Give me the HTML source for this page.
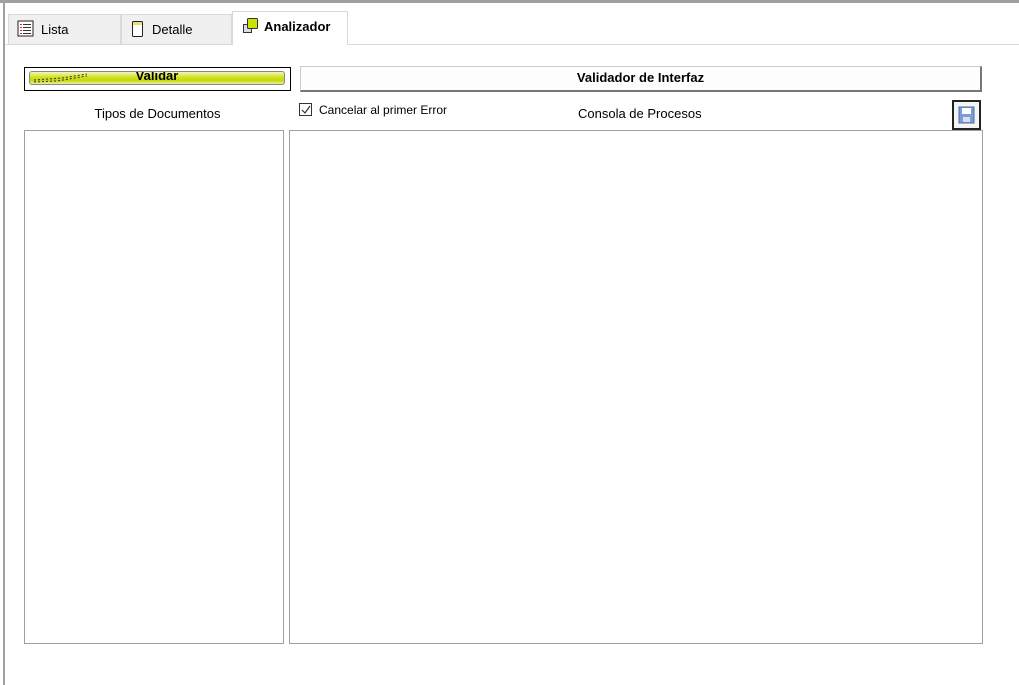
<!DOCTYPE html><html><head><style>
body{margin:0;width:1019px;height:685px;background:#fff;position:relative;overflow:hidden;font-family:"Liberation Sans",sans-serif;font-size:12px;color:#000}
.a{position:absolute}
.tab{position:absolute;top:14px;height:30px;background:#f0f0f0;border:1px solid #d9d9d9;border-bottom:none;box-sizing:border-box;line-height:30px;font-size:13px}
</style></head><body>
<div class="a" style="left:0;top:0;width:1019px;height:3px;background:#a0a0a0"></div>
<div class="a" style="left:3px;top:0;width:2px;height:685px;background:#a0a0a0"></div>
<div class="a" style="left:5px;top:3px;width:1014px;height:41px;background:#fff"></div>
<div class="tab" style="left:8px;width:113px;padding-left:32px">Lista</div>
<svg class="a" style="left:17px;top:20px" width="18" height="18"><rect x="1" y="1" width="15" height="15" fill="#fff" stroke="#222"/><g stroke="#333"><line x1="6" y1="4.5" x2="14" y2="4.5"/><line x1="6" y1="7.5" x2="14" y2="7.5"/><line x1="6" y1="10.5" x2="14" y2="10.5"/><line x1="6" y1="13.5" x2="14" y2="13.5"/></g><g stroke="#d22"><line x1="3" y1="4.5" x2="5" y2="4.5"/><line x1="3" y1="7.5" x2="5" y2="7.5"/><line x1="3" y1="10.5" x2="5" y2="10.5"/><line x1="3" y1="13.5" x2="5" y2="13.5"/></g></svg>
<div class="tab" style="left:121px;width:111px;padding-left:30px">Detalle</div>
<svg class="a" style="left:131px;top:20px" width="14" height="18"><rect x="1.5" y="1.5" width="10" height="15" rx="1" fill="#fff" stroke="#222"/><rect x="2" y="2" width="9" height="3" fill="#e8e070"/></svg>
<div class="tab" style="left:232px;top:11px;height:34px;width:116px;background:#fff;padding-left:31px;font-weight:bold;line-height:30px">Analizador</div>
<svg class="a" style="left:242px;top:17px" width="20" height="20"><rect x="1.5" y="7.5" width="8" height="8" fill="#ddd" stroke="#333"/><rect x="5.5" y="1.5" width="10" height="10" rx="1" fill="#c8e400" stroke="#333"/></svg>
<div class="a" style="left:5px;top:44px;width:227px;height:1px;background:#d9d9d9"></div>
<div class="a" style="left:348px;top:44px;width:671px;height:1px;background:#d9d9d9"></div>

<div class="a" style="left:24px;top:67px;width:267px;height:24px;border:1px solid #000;box-sizing:border-box;background:#fff"></div>
<div class="a" style="left:29px;top:71px;width:256px;height:14px;border:1px solid #888;border-radius:3px;background:linear-gradient(#f4f4c0,#cfe21c 45%,#c6d80a 70%,#eef0a0);box-sizing:border-box;text-align:center;font-weight:bold;font-size:13px;line-height:8px;overflow:hidden">Validar</div>
<svg class="a" style="left:32px;top:72px" width="60" height="12"><path d="M2 8 L30 6 L55 2" stroke="#333" stroke-dasharray="2 2" fill="none"/><path d="M2 10 L25 9 L55 4" stroke="#333" stroke-dasharray="2 2" fill="none"/></svg>

<div class="a" style="left:300px;top:66px;width:682px;height:26px;background:#fdfdfd;border:1px solid #ccc;border-right:2px solid #777;border-bottom:2px solid #777;box-sizing:border-box;text-align:center;font-weight:bold;font-size:13px;line-height:21px">Validador de Interfaz</div>

<div class="a" style="left:24px;top:106px;width:267px;text-align:center;font-size:13px">Tipos de Documentos</div>
<div class="a" style="left:299px;top:103px;width:13px;height:13px;border:1px solid #333;box-sizing:border-box;background:#fff"></div>
<svg class="a" style="left:300px;top:104px" width="12" height="12"><path d="M2 6 L5 9 L10 2" stroke="#333" fill="none" stroke-width="1.2"/></svg>
<div class="a" style="left:319px;top:103px;font-size:12px">Cancelar al primer Error</div>
<div class="a" style="left:578px;top:106px;font-size:13px">Consola de Procesos</div>
<div class="a" style="left:952px;top:100px;width:29px;height:30px;border:2px solid #222;box-sizing:border-box;background:#f4f4f4"></div>
<svg class="a" style="left:958px;top:106px" width="18" height="19"><rect x="1" y="1" width="15" height="16" fill="#7a9ed8" stroke="#4a6aa8"/><rect x="4" y="2" width="9" height="6" fill="#fff"/><rect x="5" y="11" width="7" height="5" fill="#dde"/></svg>

<div class="a" style="left:24px;top:130px;width:260px;height:514px;border:1px solid #a0a0a0;box-sizing:border-box"></div>
<div class="a" style="left:289px;top:130px;width:694px;height:514px;border:1px solid #a0a0a0;box-sizing:border-box"></div>
</body></html>
